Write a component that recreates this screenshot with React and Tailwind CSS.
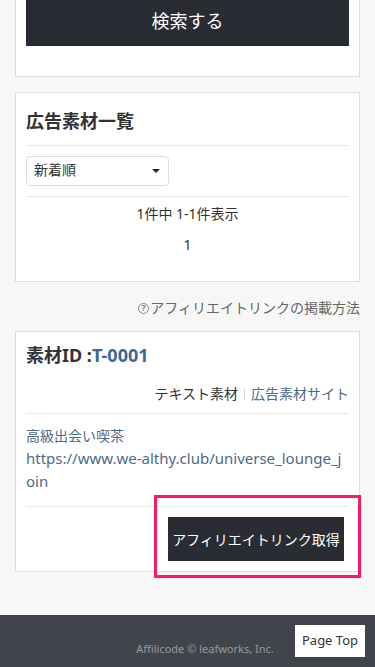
import React from 'react';

const font = "font-['Noto_Sans','Noto_Sans_CJK_JP',sans-serif]";

const Card = ({ className = '', children }) => (
    <div className={`bg-white border border-[#dddddd] px-[10px] ${className}`}>{children}</div>
);

const App = () => {
    return (
        <div className={`min-h-screen bg-[#f7f7f7] ${font} text-[#333333] overflow-hidden`}>
            <div className="px-[15px]">
                {/* Search form (scrolled) */}
                <Card className="-mt-[15px] pt-[10px] pb-[30px]">
                    <button className="w-full h-[50px] bg-[#292c33] text-white text-[18px] flex items-center justify-center">
                        検索する
                    </button>
                </Card>

                {/* Material list */}
                <Card className="mt-[15px] pt-[10px] pb-[10px]">
                    <h2 className="pt-[6px] pb-[12px] leading-[24px] text-[18px] font-bold border-b border-[#e8e8e8]">
                        広告素材一覧
                    </h2>
                    <div className="py-[10px] border-b border-[#e8e8e8]">
                        <div className="w-[143px] h-[30px] rounded-[4px] border border-[#dddddd] flex items-center justify-between pl-[7px] pr-[8px] text-[14px] leading-[20px]">
                            <span className="-mt-[2px]">新着順</span>
                            <span className="w-0 h-0 border-l-[4px] border-r-[4px] border-t-[4px] border-l-transparent border-r-transparent border-t-[#222222]" />
                        </div>
                    </div>
                    <p className="pt-[7px] text-center text-[14px] leading-[20px]">1件中 1-1件表示</p>
                    <p className="mt-[11px] mb-[16px] text-center text-[14px] leading-[20px]">1</p>
                </Card>

                <div className="mt-[16px] mb-[13px] flex items-center justify-end gap-[1px] text-[14px] leading-[20px] text-[#666666]">
                    <span className="w-[11px] h-[11px] rounded-full border border-[#888888] text-[8px] leading-none flex items-center justify-center text-[#777777] font-bold">?</span>
                    <span>アフィリエイトリンクの掲載方法</span>
                </div>

                {/* Material item */}
                <Card className="relative pt-[10px] pb-[10px]">
                    <h3 className="pt-[1px] leading-[24px] text-[18px] font-bold">
                        素材ID :<span className="text-[#3b6a96]">T-0001</span>
                    </h3>
                    <div className="mt-[17px] pb-[9px] flex items-center justify-end text-[14px] leading-[20px] border-b border-[#e8e8e8]">
                        <span>テキスト素材</span>
                        <span className="mx-[6px] w-px h-[12px] bg-[#d5d5d5]" />
                        <span className="text-[#4d6b87]">広告素材サイト</span>
                    </div>
                    <div className="pt-[10px] pb-[13px] text-[14px] leading-[23px] text-[#4d6b87] border-b border-[#e8e8e8]">
                        <p>高級出会い喫茶</p>
                        <p className="text-[15px] break-all">https://www.we-althy.club/universe_lounge_join</p>
                    </div>
                    <div className="mt-[10px] flex justify-end pr-[5px]">
                        <button className="w-[176px] h-[44px] bg-[#292c33] text-white text-[14px] flex items-center justify-center">
                            アフィリエイトリンク取得
                        </button>
                    </div>
                    {/* highlight annotation */}
                    <div className="absolute left-[138px] top-[163px] w-[207px] h-[83px] border-[3px] border-[#ff1a5e] pointer-events-none" />
                </Card>
            </div>

            <footer className="relative mt-[43px] h-[80px] bg-[#41444b]">
                <p className="pt-[26px] pl-[35px] text-center text-[11px] text-[#9a9a9a]">
                    Affilicode © leafworks, Inc.
                </p>
                <button className="absolute left-[295px] top-[10px] w-[70px] h-[32px] bg-white text-[13px] text-[#333333] flex items-center justify-center">
                    Page Top
                </button>
            </footer>
        </div>
    );
};

export default App;
